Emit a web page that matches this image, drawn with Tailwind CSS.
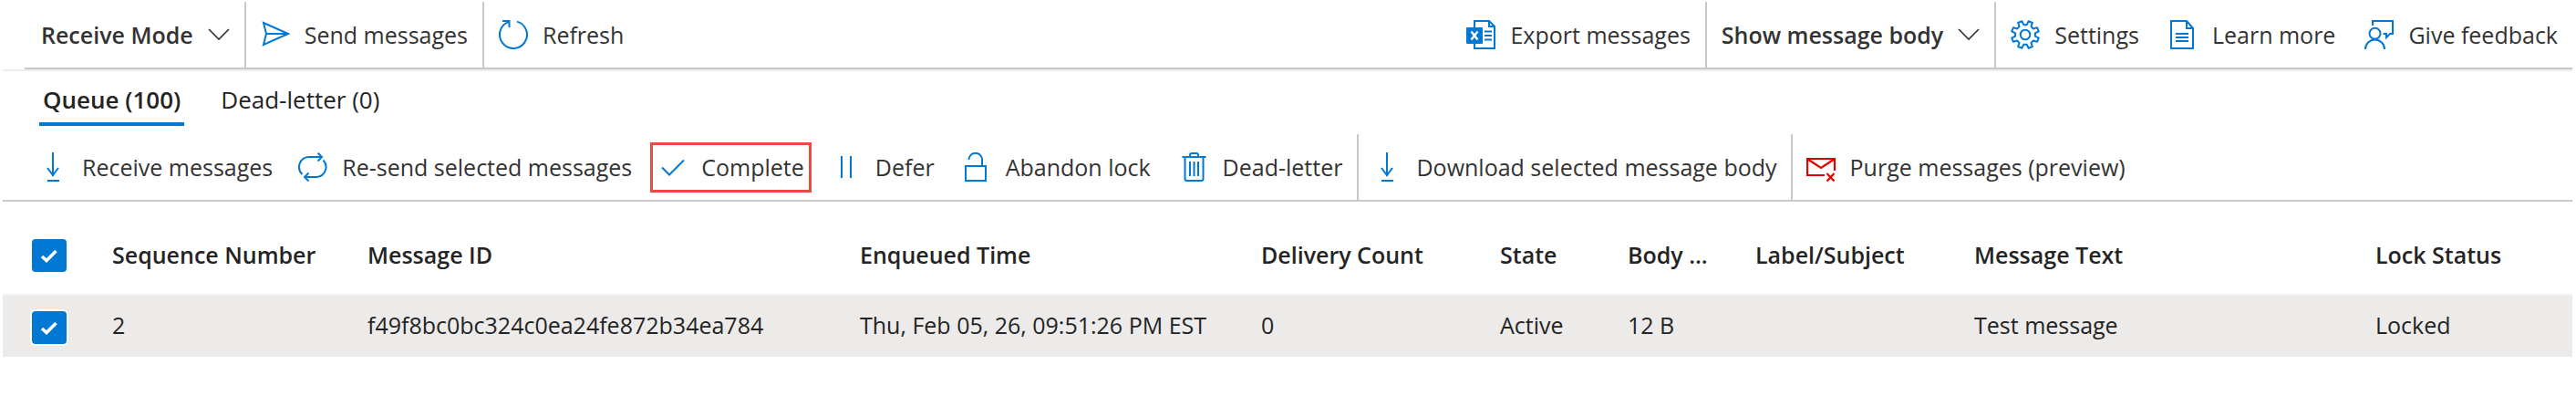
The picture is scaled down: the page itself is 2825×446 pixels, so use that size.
<!DOCTYPE html>
<html lang="en">
<head>
  <meta charset="UTF-8">
  <meta name="viewport" content="width=device-width, initial-scale=1.0">
  <title>Service Bus Explorer</title>
  <script src="https://cdn.jsdelivr.net/npm/@tailwindcss/browser@4"></script>
</head>
<body class="bg-white text-[#333333] text-[25px] leading-8 font-['Open_Sans',sans-serif] whitespace-nowrap">
  <div class="pl-[3px] pr-1 pt-[2px]">

    <!-- Top command bar -->
    <header class="border-b-2 border-[#ededed]">
      <div class="ml-6 flex h-[74px] border-b-2 border-[#c8c8c8]">
        <button class="flex items-center gap-4 pl-[18px] pr-4 border-r-2 border-[#c8c8c8] font-semibold">
          Receive Mode
          <svg class="w-6 h-8" viewBox="0 0 24 32" fill="none" stroke="#333333" stroke-width="1.6"><path d="M1 10l11 11 11-11"/></svg>
        </button>
        <button class="flex items-center gap-4 px-4 border-r-2 border-[#c8c8c8]">
          <svg class="size-8" viewBox="0 0 32 32" fill="none" stroke="#0078d4" stroke-width="2"><path d="M3 3l27 12L3 27l3-12zM6 15h24"/></svg>
          Send messages
        </button>
        <button class="flex items-center gap-4 px-4">
          <svg class="size-8" viewBox="0 0 32 32" fill="none" stroke="#0078d4" stroke-width="2"><path d="M20 1.6A15 15 0 1 1 11 1.9M4 1h7.5v7"/></svg>
          Refresh
        </button>

        <button class="ml-auto flex items-center gap-4 px-4 border-r-2 border-[#c8c8c8]">
          <svg class="size-8" viewBox="0 0 32 32" fill="none" stroke="#0078d4" stroke-width="2">
            <path d="M9 8V1h16l6 6v24H9v-5M25 1v6h6M20 12.5h8M20 17h8M20 21.5h8"/>
            <rect x="0" y="8" width="18" height="18" rx="1" fill="#0078d4" stroke="none"/>
            <path d="M5.500 12.500l7 9M12.500 12.500l-7 9" stroke="#ffffff" stroke-width="2.400"/>
          </svg>
          Export messages
        </button>
        <button class="flex items-center gap-4 px-4 border-r-2 border-[#c8c8c8] font-semibold">
          Show message body
          <svg class="w-6 h-8" viewBox="0 0 24 32" fill="none" stroke="#333333" stroke-width="1.6"><path d="M1 10l11 11 11-11"/></svg>
        </button>
        <button class="flex items-center gap-4 px-4">
          <svg class="size-8" viewBox="-16 -16 32 32" fill="none" stroke="#0078d4" stroke-width="2" stroke-linejoin="round">
            <path d="M1.72-10.86L3.68-14.75 7.83-13.03 6.47-8.9 8.9-6.47 13.03-7.83 14.75-3.68 10.86-1.72V1.72L14.75 3.68 13.03 7.83 8.9 6.47 6.47 8.9 7.83 13.03 3.68 14.75 1.72 10.86H-1.72L-3.68 14.75-7.83 13.03-6.47 8.9-8.9 6.47-13.03 7.83-14.75 3.68-10.86 1.72V-1.72L-14.75-3.68-13.03-7.83-8.9-6.47-6.47-8.9-7.83-13.03-3.68-14.75-1.72-10.86z"/>
            <circle r="5.300"/>
          </svg>
          Settings
        </button>
        <a href="#" class="flex items-center gap-4 px-4">
          <svg class="size-8" viewBox="0 0 32 32" fill="none" stroke="#0078d4" stroke-width="2"><path d="M3 1h17l7 8v22H3zM20 1v8h7M8 15h14M8 19h14M8 23h14"/></svg>
          Learn more
        </a>
        <a href="#" class="flex items-center gap-4 px-4">
          <svg class="size-8" viewBox="0 0 32 32" fill="none" stroke="#0078d4" stroke-width="2">
            <circle cx="11.500" cy="14.700" r="6"/>
            <path d="M1 32a10.500 10.500 0 0 1 21 0M9 6V1h22v14h-3l-4 4v-4h-3.500"/>
          </svg>
          Give feedback
        </a>
      </div>
    </header>

    <!-- Queue tabs -->
    <nav class="ml-10 flex gap-9 text-[26px] text-[#242424]" role="tablist">
      <button role="tab" aria-selected="true" class="h-[60px] px-1 pt-[2px] font-semibold relative after:absolute after:inset-x-0 after:bottom-0 after:h-1 after:bg-[#0078d4]">Queue (100)</button>
      <button role="tab" aria-selected="false" class="h-[60px] px-1 pt-[2px]">Dead-letter (0)</button>
    </nav>

    <!-- Message actions -->
    <div class="mt-[9px] pl-6 flex h-[74px] border-b-2 border-[#c8c8c8]">
      <button class="flex items-center gap-4 px-[15px]">
        <svg class="size-8" viewBox="0 0 32 32" fill="none" stroke="#0078d4" stroke-width="2"><path d="M16 0v26M10 17l6 8 6-8M10 31h13"/></svg>
        Receive messages
      </button>
      <button class="flex items-center gap-4 px-[13px]">
        <svg class="size-8" viewBox="0 0 32 32" fill="none" stroke="#0078d4" stroke-width="2"><path d="M4.500 24A11 11 0 0 1 11.500 5H26M21.500 0.700L26 5l-4.500 4.500M27.500 8.500A11 11 0 0 1 20.500 27H7M11.500 22.500L7 27l4.500 4.500"/></svg>
        Re-send selected messages
      </button>
      <button class="relative flex items-center gap-4 px-[15px]">
        <svg class="size-8" viewBox="0 0 32 32" fill="none" stroke="#0078d4" stroke-width="2"><path d="M5 16.500l8 8L29 8.500"/></svg>
        Complete
        <span class="absolute inset-x-[7px] top-[9px] bottom-2 border-3 border-[#e84a45]"></span>
      </button>
      <button class="flex items-center gap-4 px-[15px]">
        <svg class="size-8" viewBox="0 0 32 32" fill="none" stroke="#0078d4" stroke-width="2"><path d="M11 4v24M21 4v24"/></svg>
        Defer
      </button>
      <button class="flex items-center gap-4 px-[15px]">
        <svg class="size-8" viewBox="0 0 32 32" fill="none" stroke="#0078d4" stroke-width="2"><path d="M4 15h22v16H4zM7.500 8a7 7 0 0 1 14.500 0v7"/></svg>
        Abandon lock
      </button>
      <button class="flex items-center gap-4 px-4 border-r-2 border-[#c8c8c8]">
        <svg class="size-8" viewBox="0 0 32 32" fill="none" stroke="#0078d4" stroke-width="2"><path d="M3.500 5h26M12 5V3q0-2 2-2h5q2 0 2 2v2M6.500 5v24q0 2 2 2h16q2 0 2-2V5M12 10v16M16.500 10v16M21 10v16"/></svg>
        Dead-letter
      </button>
      <button class="flex items-center gap-4 px-[15px] border-r-2 border-[#c8c8c8]">
        <svg class="size-8" viewBox="0 0 32 32" fill="none" stroke="#0078d4" stroke-width="2"><path d="M16 0v26M10 17l6 8 6-8M10 31h13"/></svg>
        Download selected message body
      </button>
      <button class="flex items-center gap-4 px-[15px]">
        <svg class="size-8" viewBox="0 0 32 32" fill="none" stroke="#e50000" stroke-width="2.200"><path d="M20 25H1V7h30v13M1.500 7.500L16 17 30.500 7.500M22.500 23l8 8.500M30.500 23l-8 8.500"/></svg>
        Purge messages (preview)
      </button>
    </div>

    <!-- Messages -->
    <table class="mt-4 w-full table-fixed border-collapse text-left text-[#242424]">
      <colgroup>
        <col class="w-[120px]"><col class="w-[280px]"><col class="w-[540px]"><col class="w-[440px]"><col class="w-[262px]">
        <col class="w-[140px]"><col class="w-[140px]"><col class="w-[240px]"><col class="w-[440px]"><col>
      </colgroup>
      <thead>
        <tr class="h-[86px]">
          <th class="pl-8">
            <label class="grid w-[38px] *:[grid-area:1/1]">
              <input type="checkbox" checked aria-label="Select all messages" class="appearance-none h-9 w-[38px] rounded-sm bg-[#0078d4]">
              <svg class="m-auto size-5" viewBox="0 0 20 20" fill="none" stroke="#ffffff" stroke-width="3.500"><path d="M2 11l5 4.500L17.500 5"/></svg>
            </label>
          </th>
          <th class="pb-[2px] font-semibold">Sequence Number</th>
          <th class="pb-[2px] font-semibold">Message ID</th>
          <th class="pb-[2px] font-semibold">Enqueued Time</th>
          <th class="pb-[2px] font-semibold">Delivery Count</th>
          <th class="pb-[2px] font-semibold">State</th>
          <th class="pb-[2px] font-semibold">Body ...</th>
          <th class="pb-[2px] font-semibold">Label/Subject</th>
          <th class="pb-[2px] font-semibold">Message Text</th>
          <th class="pb-[2px] font-semibold">Lock Status</th>
        </tr>
      </thead>
      <tbody>
        <tr class="h-[68px] bg-[#ecebe9] border-t-2 border-[#f1f1f1]">
          <td class="pl-8 pt-[2px]">
            <label class="grid w-[38px] *:[grid-area:1/1]">
              <input type="checkbox" checked aria-label="Select message 2" class="appearance-none h-9 w-[38px] rounded-sm bg-[#0078d4] ring-2 ring-white">
              <svg class="m-auto size-5 z-10" viewBox="0 0 20 20" fill="none" stroke="#ffffff" stroke-width="3.500"><path d="M2 11l5 4.500L17.500 5"/></svg>
            </label>
          </td>
          <td class="pb-1">2</td>
          <td class="pb-1">f49f8bc0bc324c0ea24fe872b34ea784</td>
          <td class="pb-1">Thu, Feb 05, 26, 09:51:26 PM EST</td>
          <td class="pb-1">0</td>
          <td class="pb-1">Active</td>
          <td class="pb-1">12 B</td>
          <td class="pb-1"></td>
          <td class="pb-1">Test message</td>
          <td class="pb-1">Locked</td>
        </tr>
      </tbody>
    </table>
  </div>
</body>
</html>
